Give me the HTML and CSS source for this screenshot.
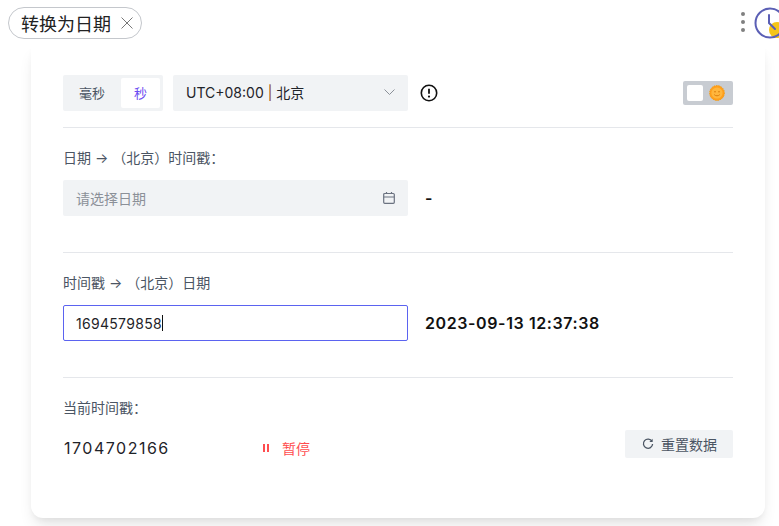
FILE: index.html
```html
<!DOCTYPE html>
<html lang="zh">
<head>
<meta charset="utf-8">
<title>转换为日期</title>
<link rel="stylesheet" href="styles.css">
</head>
<body>
<header class="topbar">
  <div class="pill"><span>转换为日期</span>
    <svg class="pill-x" width="12" height="12" viewBox="0 0 12 12"><path d="M.5.5l11 11M11.5.5l-11 11" stroke="#777" stroke-width="1" fill="none"/></svg>
  </div>
  <div class="top-right">
    <div class="dots"><i></i><i></i><i></i></div>
    <svg class="logo" width="32" height="32" viewBox="0 0 32 32"><circle cx="23" cy="23" r="8" fill="#f5c518"/><circle cx="16" cy="16" r="14.5" fill="none" stroke="#5b5fb5" stroke-width="2"/><path d="M15 8v8l6 6" fill="none" stroke="#5b5fb5" stroke-width="2" stroke-linecap="round"/></svg>
  </div>
</header>
<main class="card">
  <section class="row-top">
    <div class="seg"><span class="seg-item">毫秒</span><span class="seg-item seg-on">秒</span></div>
    <div class="field select"><span>UTC+08:00 <b class="bar">|</b> 北京</span>
      <svg width="11" height="6" viewBox="0 0 11 6"><path d="M.5.5l5 5 5-5" fill="none" stroke="#8b9098" stroke-width="1"/></svg>
    </div>
    <svg class="alert" width="18" height="18" viewBox="0 0 18 18"><circle cx="9" cy="9" r="7.7" fill="none" stroke="#111" stroke-width="1.6"/><path d="M9 4.8v5" stroke="#111" stroke-width="1.8"/><circle cx="9" cy="12.6" r="1.1" fill="#111"/></svg>
    <div class="theme"><span class="knob"></span><span class="sun">
      <svg width="16" height="16" viewBox="0 0 16 16"><circle cx="8" cy="8" r="7.4" fill="#ff9f1c" stroke="#f59a0c" stroke-width="1" stroke-dasharray="1.4 1"/><circle cx="8" cy="8" r="5.6" fill="#ffb63d"/><circle cx="6" cy="6.8" r=".8" fill="#d9780a"/><circle cx="10" cy="6.8" r=".8" fill="#d9780a"/><path d="M5.2 9.6c1.3 1.6 4.3 1.6 5.6 0" fill="none" stroke="#d9780a" stroke-width=".9"/></svg>
    </span></div>
  </section>
  <section class="block">
    <div class="label">日期 → （北京）时间戳：</div>
    <div class="line">
      <div class="field date"><span class="placeholder">请选择日期</span>
        <svg width="12" height="12" viewBox="0 0 12 12"><rect x=".7" y="1.5" width="10.6" height="9.8" rx="1" fill="none" stroke="#6b7280" stroke-width="1.2"/><path d="M.7 5h10.6M3.5 0v2M8.5 0v2" stroke="#6b7280" stroke-width="1.2"/></svg>
      </div>
      <div class="result">-</div>
    </div>
  </section>
  <section class="block">
    <div class="label">时间戳 → （北京）日期</div>
    <div class="line">
      <div class="field stamp"><span class="stamp-val">1694579858</span><span class="caret"></span></div>
      <div class="result">2023-09-13 12:37:38</div>
    </div>
  </section>
  <section class="block last">
    <div class="label">当前时间戳：</div>
    <div class="now">
      <span class="now-val">1704702166</span>
      <span class="pause"><svg width="8" height="8" viewBox="0 0 8 8"><path d="M1 0h2v8H1zM5 0h2v8H5z" fill="#ff4d4f"/></svg>暂停</span>
      <span class="reset"><svg width="12" height="12" viewBox="0 0 12 12"><path d="M10 3.4A4.6 4.6 0 1 0 10.6 6" fill="none" stroke="#4b5563" stroke-width="1.3"/><path d="M10.6 .8v3.2H7.4z" fill="#4b5563"/></svg>重置数据</span>
    </div>
  </section>
</main>
</body>
</html>
```

FILE: styles.css
```css
* { box-sizing: border-box; }
html, body { margin: 0; height: 100%; overflow: hidden; background: #fff; }
body { font-family: Inter, "Noto Sans CJK SC", sans-serif; color: #1f2329; }

.topbar { position: relative; z-index: 1; display: flex; justify-content: space-between; align-items: flex-start; height: 45px; padding: 7px 0 0 8px; background: #fff; }
.pill { display: flex; align-items: center; gap: 10px; height: 32px; width: 134px; padding: 0 8px 0 12px; border: 1px solid #c4c7cc; border-radius: 16px; font-size: 18px; color: #222; white-space: nowrap; }
.pill-x { flex: none; }
.top-right { display: flex; align-items: flex-start; gap: 9px; margin-right: -7px; }
.dots { display: flex; flex-direction: column; gap: 4px; padding-top: 5px; margin-left: 1px; }
.dots i { display: block; width: 4px; height: 4px; border-radius: 50%; background: #808080; }

.card { width: 734px; height: 473px; margin-left: 31px; padding: 30px 32px 0; background: #fff; border-radius: 0 0 12px 12px; box-shadow: 0 10px 15px -3px rgba(0,0,0,.1), 0 4px 6px -2px rgba(0,0,0,.05); font-size: 14px; }

.row-top { display: flex; align-items: center; height: 53px; padding-bottom: 17px; border-bottom: 1px solid #e5e7eb; }
.seg { display: flex; align-items: center; width: 100px; height: 36px; padding: 3px; background: #f1f3f5; border-radius: 2px; color: #4b5563; font-size: 13px; }
.seg-item { flex: 1; height: 30px; line-height: 30px; text-align: center; }
.seg-item:first-child { flex: 0 0 55px; padding-right: 3px; }
.seg-on { background: #fff; color: #6c4cf1; border-radius: 2px; }

.field { display: flex; align-items: center; justify-content: space-between; width: 345px; height: 36px; padding: 0 13px; background: #f1f3f5; border-radius: 2px; }
.select { width: 235px; margin-left: 10px; padding-bottom: 1px; color: #1f2329; }
.date { padding-bottom: 1px; }
.bar { font-weight: 400; color: #8a4a10; }
.alert { margin-left: 12px; }
.theme { display: flex; align-items: center; justify-content: space-between; width: 50px; height: 24px; margin-left: auto; padding: 0 8px 0 4px; background: #c8ccd2; border-radius: 2px; }
.knob { width: 16px; height: 16px; background: #fff; border-radius: 2px; }
.sun { display: flex; }

.block { height: 125px; padding-top: 22px; border-bottom: 1px solid #e5e7eb; }
.block.last { height: auto; border-bottom: 0; }
.label { height: 16px; line-height: 15px; color: #4b5563; white-space: nowrap; }
.line { display: flex; align-items: center; margin-top: 14px; }
.placeholder { color: #8b9098; }
.stamp { padding: 0 12px; background: #fff; border: 1px solid #5b63f0; justify-content: flex-start; color: #1f2329; }
.stamp-val { letter-spacing: .3px; }
.caret { width: 1px; height: 16px; background: #111; }
.result { margin-left: 17px; font-size: 16px; font-weight: 600; color: #111; letter-spacing: .6px; }

.now { display: flex; align-items: center; height: 36px; margin-top: 14px; }
.now-val { width: 199px; padding-left: 1px; font-size: 16px; letter-spacing: 1.5px; color: #1f2329; }
.pause { display: flex; align-items: center; gap: 12px; padding-bottom: 1px; color: #ff4d4f; }
.reset { display: flex; align-items: center; align-self: flex-start; gap: 7px; width: 108px; height: 28px; margin-left: auto; padding: 0 0 1px 17px; background: #f1f3f5; border-radius: 2px; color: #4b5563; }
```
